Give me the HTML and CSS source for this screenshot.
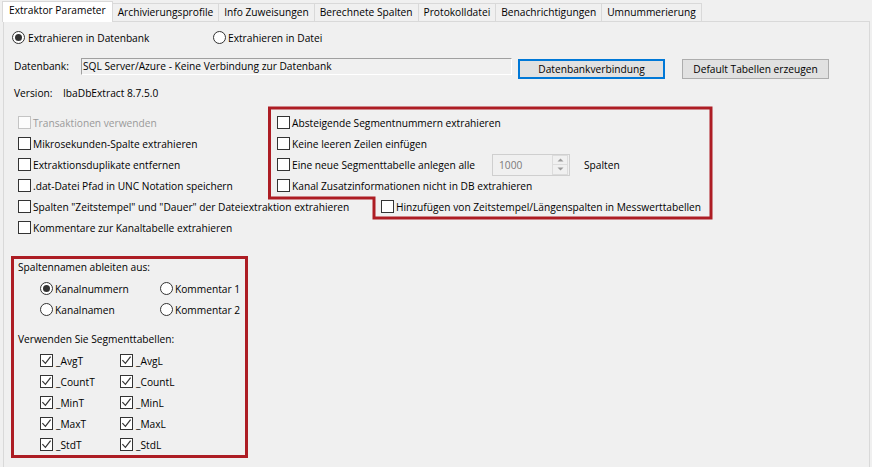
FILE: index.html
```html
<!DOCTYPE html>
<html lang="de">
<head>
<meta charset="utf-8">
<title>Extraktor Parameter</title>
<link rel="stylesheet" href="styles.css">
</head>
<body>
<div class="tabs">
  <div class="tab active">Extraktor Parameter</div>
  <div class="tab">Archivierungsprofile</div>
  <div class="tab">Info Zuweisungen</div>
  <div class="tab">Berechnete Spalten</div>
  <div class="tab">Protokolldatei</div>
  <div class="tab">Benachrichtigungen</div>
  <div class="tab">Umnummerierung</div>
</div>
<div class="panel">
  <div class="top-radios">
    <div class="opt opt-db"><span class="rb on"></span><span>Extrahieren in Datenbank</span></div>
    <div class="opt"><span class="rb"></span><span>Extrahieren in Datei</span></div>
  </div>
  <div class="db-row">
    <span class="db-label">Datenbank:</span>
    <div class="field">SQL Server/Azure - Keine Verbindung zur Datenbank</div>
    <button class="btn btn-focus">Datenbankverbindung</button>
    <button class="btn btn-default">Default Tabellen erzeugen</button>
  </div>
  <div class="version-row">
    <span class="version-label">Version:</span>
    <span>IbaDbExtract 8.7.5.0</span>
  </div>
  <div class="options">
    <div class="cb-item disabled"><span class="cb"></span><span>Transaktionen verwenden</span></div>
    <div class="cb-item"><span class="cb"></span><span>Absteigende Segmentnummern extrahieren</span></div>
    <div class="cb-item"><span class="cb"></span><span>Mikrosekunden-Spalte extrahieren</span></div>
    <div class="cb-item"><span class="cb"></span><span>Keine leeren Zeilen einfügen</span></div>
    <div class="cb-item"><span class="cb"></span><span>Extraktionsduplikate entfernen</span></div>
    <div class="cb-item">
      <span class="cb"></span><span class="seg-label">Eine neue Segmenttabelle anlegen alle</span>
      <div class="spin">
        <span class="spin-val">1000</span>
        <span class="spin-btns">
          <span class="spin-btn"><svg width="7" height="4" viewBox="0 0 7 4"><polygon points="0.5,3.5 3.5,0.5 6.5,3.5" fill="#9a9a9a"/></svg></span>
          <span class="spin-btn"><svg width="7" height="4" viewBox="0 0 7 4"><polygon points="0.5,0.5 6.5,0.5 3.5,3.5" fill="#9a9a9a"/></svg></span>
        </span>
      </div>
      <span class="spin-unit">Spalten</span>
    </div>
    <div class="cb-item"><span class="cb"></span><span>.dat-Datei Pfad in UNC Notation speichern</span></div>
    <div class="cb-item"><span class="cb"></span><span>Kanal Zusatzinformationen nicht in DB extrahieren</span></div>
    <div class="cb-item"><span class="cb"></span><span>Spalten "Zeitstempel" und "Dauer" der Dateiextraktion extrahieren</span></div>
    <div class="cb-item shifted"><span class="cb"></span><span>Hinzufügen von Zeitstempel/Längenspalten in Messwerttabellen</span></div>
    <div class="cb-item"><span class="cb"></span><span>Kommentare zur Kanaltabelle extrahieren</span></div>
  </div>
  <div class="group">
    <div class="group-title">Spaltennamen ableiten aus:</div>
    <div class="radio-grid">
      <div class="opt"><span class="rb on"></span><span>Kanalnummern</span></div>
      <div class="opt"><span class="rb"></span><span>Kommentar 1</span></div>
      <div class="opt"><span class="rb"></span><span>Kanalnamen</span></div>
      <div class="opt"><span class="rb"></span><span>Kommentar 2</span></div>
    </div>
    <div class="group-title sub">Verwenden Sie Segmenttabellen:</div>
    <div class="check-grid">
      <div class="cb-item wide"><span class="cb checked"><svg width="11" height="11" viewBox="0 0 11 11"><polyline points="1.4,5.2 4.4,8.3 9.6,1.6" fill="none" stroke="#333" stroke-width="1.2"/></svg></span><span>_AvgT</span></div>
      <div class="cb-item wide"><span class="cb checked"><svg width="11" height="11" viewBox="0 0 11 11"><polyline points="1.4,5.2 4.4,8.3 9.6,1.6" fill="none" stroke="#333" stroke-width="1.2"/></svg></span><span>_AvgL</span></div>
      <div class="cb-item wide"><span class="cb checked"><svg width="11" height="11" viewBox="0 0 11 11"><polyline points="1.4,5.2 4.4,8.3 9.6,1.6" fill="none" stroke="#333" stroke-width="1.2"/></svg></span><span>_CountT</span></div>
      <div class="cb-item wide"><span class="cb checked"><svg width="11" height="11" viewBox="0 0 11 11"><polyline points="1.4,5.2 4.4,8.3 9.6,1.6" fill="none" stroke="#333" stroke-width="1.2"/></svg></span><span>_CountL</span></div>
      <div class="cb-item wide"><span class="cb checked"><svg width="11" height="11" viewBox="0 0 11 11"><polyline points="1.4,5.2 4.4,8.3 9.6,1.6" fill="none" stroke="#333" stroke-width="1.2"/></svg></span><span>_MinT</span></div>
      <div class="cb-item wide"><span class="cb checked"><svg width="11" height="11" viewBox="0 0 11 11"><polyline points="1.4,5.2 4.4,8.3 9.6,1.6" fill="none" stroke="#333" stroke-width="1.2"/></svg></span><span>_MinL</span></div>
      <div class="cb-item wide"><span class="cb checked"><svg width="11" height="11" viewBox="0 0 11 11"><polyline points="1.4,5.2 4.4,8.3 9.6,1.6" fill="none" stroke="#333" stroke-width="1.2"/></svg></span><span>_MaxT</span></div>
      <div class="cb-item wide"><span class="cb checked"><svg width="11" height="11" viewBox="0 0 11 11"><polyline points="1.4,5.2 4.4,8.3 9.6,1.6" fill="none" stroke="#333" stroke-width="1.2"/></svg></span><span>_MaxL</span></div>
      <div class="cb-item wide"><span class="cb checked"><svg width="11" height="11" viewBox="0 0 11 11"><polyline points="1.4,5.2 4.4,8.3 9.6,1.6" fill="none" stroke="#333" stroke-width="1.2"/></svg></span><span>_StdT</span></div>
      <div class="cb-item wide"><span class="cb checked"><svg width="11" height="11" viewBox="0 0 11 11"><polyline points="1.4,5.2 4.4,8.3 9.6,1.6" fill="none" stroke="#333" stroke-width="1.2"/></svg></span><span>_StdL</span></div>
    </div>
  </div>
</div>
<svg class="annot" width="872" height="467" viewBox="0 0 872 467">
  <polygon points="269.5,108 711,108 711,218 374,218 374,198 269.5,198" fill="none" stroke="#ad1d24" stroke-width="3"/>
</svg>
</body>
</html>
```
FILE: styles.css
```css
* { box-sizing: border-box; }
html, body { margin: 0; padding: 0; }
body {
  width: 872px;
  height: 467px;
  overflow: hidden;
  position: relative;
  background: #f0f0f0;
  font-family: "Open Sans", "Noto Sans", sans-serif;
  font-size: 10.2px;
  color: #000;
}

.tabs {
  display: flex;
  align-items: flex-end;
  height: 21px;
  padding-left: 2px;
  position: relative;
  z-index: 2;
}
.tab {
  height: 18px;
  line-height: 16px;
  padding: 0 5px;
  border: 1px solid #d9d9d9;
  border-left: none;
  border-bottom: none;
  white-space: nowrap;
  background: #f0f0f0;
}
.tab.active {
  height: 21px;
  margin-bottom: -1px;
  line-height: 17px;
  padding: 0 6px;
  background: #fff;
  border-left: 1px solid #d9d9d9;
}

.panel {
  margin-left: 3px;
  width: 867px;
  height: 446px;
  border: 1px solid #d9d9d9;
  border-bottom: none;
  background: #f0f0f0;
  padding-top: 9px;
}

.top-radios {
  display: flex;
  height: 13px;
  margin-left: 8px;
}
.opt {
  display: flex;
  align-items: center;
  gap: 2px;
  white-space: nowrap;
}
.opt-db { width: 201px; gap: 3px; }

.rb {
  width: 13px;
  height: 13px;
  border: 1px solid #333;
  border-radius: 50%;
  background: #fff;
  flex: none;
  display: flex;
  align-items: center;
  justify-content: center;
}
.rb.on::after {
  content: "";
  width: 7px;
  height: 7px;
  border-radius: 50%;
  background: #333;
}

.db-row {
  display: flex;
  align-items: flex-start;
  height: 21px;
  margin-top: 14px;
  margin-left: 10px;
}
.db-label { width: 67px; line-height: 17px; }
.field {
  width: 431px;
  height: 17px;
  border: 1px solid;
  border-color: #a0a0a0 #fff #fff #a0a0a0;
  padding-left: 1px;
  line-height: 15px;
  white-space: nowrap;
}
.btn {
  font: inherit;
  color: #000;
  width: 147px;
  height: 20px;
  margin-top: 1px;
  padding: 0;
  background: #e1e1e1;
  border: 1px solid #adadad;
}
.btn-focus { border: 2px solid #0078d7; margin-left: 6px; }
.btn-default { margin-left: 17px; }

.version-row {
  display: flex;
  margin-top: 6px;
  margin-left: 10px;
  line-height: 16px;
}
.version-label { width: 49px; }

.options {
  display: grid;
  grid-template-columns: 259px auto;
  grid-auto-rows: 21px;
  margin-top: 11px;
  margin-left: 14px;
}
.cb-item {
  display: flex;
  align-items: center;
  gap: 2px;
  white-space: nowrap;
}
.cb-item.wide { gap: 3px; }
.cb-item.shifted { margin-left: 104px; }
.cb {
  width: 13px;
  height: 13px;
  border: 1px solid #333;
  background: #fff;
  flex: none;
  display: flex;
  align-items: center;
  justify-content: center;
}
.cb svg { display: block; }
.disabled { color: #9a9a9a; }
.disabled .cb { border-color: #c4c4c4; background: #fcfcfc; }

.seg-label { width: 198px; }
.spin {
  display: flex;
  align-items: center;
  justify-content: space-between;
  width: 78px;
  height: 22px;
  border: 1px solid #cfcfcf;
  background: #f0f0f0;
  padding: 0 1px 0 6px;
  color: #7a7a7a;
  flex: none;
}
.spin-btns {
  display: flex;
  flex-direction: column;
  width: 16px;
  height: 20px;
}
.spin-btn {
  flex: 1;
  border: 1px solid #dcdcdc;
  display: flex;
  align-items: center;
  justify-content: center;
}
.spin-btn + .spin-btn { border-top: none; }
.spin-btn svg { display: block; }
.spin-unit { margin-left: 12px; }

.group {
  margin-top: 18px;
  margin-left: 7px;
  width: 237px;
  height: 202px;
  border: 3px solid #ad1d24;
}
.group-title {
  line-height: 16px;
  padding-left: 4px;
}
.group-title.sub { margin-top: 11px; }
.radio-grid {
  display: grid;
  grid-template-columns: 120px 120px;
  grid-auto-rows: 21px;
  margin: 3px 0 0 26px;
}
.check-grid {
  display: grid;
  grid-template-columns: 80px 80px;
  grid-auto-rows: 21px;
  margin: 3px 0 0 26px;
}

.annot {
  position: absolute;
  left: 0;
  top: 0;
  pointer-events: none;
}
```
